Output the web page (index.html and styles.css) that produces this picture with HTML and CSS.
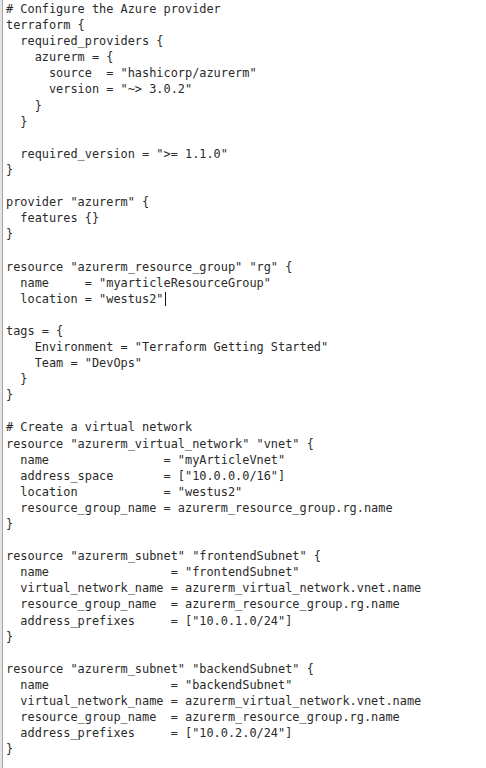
FILE: index.html
```html
<!DOCTYPE html>
<html>
<head>
<meta charset="utf-8">
<link rel="stylesheet" href="styles.css">
</head>
<body>
<div class="frame">
<pre class="code"># Configure the Azure provider
terraform {
  required_providers {
    azurerm = {
      source  = "hashicorp/azurerm"
      version = "~&gt; 3.0.2"
    }
  }

  required_version = "&gt;= 1.1.0"
}

provider "azurerm" {
  features {}
}

resource "azurerm_resource_group" "rg" {
  name     = "myarticleResourceGroup"
  location = "westus2"<span class="caret"></span>

tags = {
    Environment = "Terraform Getting Started"
    Team = "DevOps"
  }
}

# Create a virtual network
resource "azurerm_virtual_network" "vnet" {
  name                = "myArticleVnet"
  address_space       = ["10.0.0.0/16"]
  location            = "westus2"
  resource_group_name = azurerm_resource_group.rg.name
}

resource "azurerm_subnet" "frontendSubnet" {
  name                 = "frontendSubnet"
  virtual_network_name = azurerm_virtual_network.vnet.name
  resource_group_name  = azurerm_resource_group.rg.name
  address_prefixes     = ["10.0.1.0/24"]
}

resource "azurerm_subnet" "backendSubnet" {
  name                 = "backendSubnet"
  virtual_network_name = azurerm_virtual_network.vnet.name
  resource_group_name  = azurerm_resource_group.rg.name
  address_prefixes     = ["10.0.2.0/24"]
}</pre>
</div>
</body>
</html>
```
FILE: styles.css
```css
html, body {
  margin: 0;
  padding: 0;
  background: #ffffff;
}
.frame {
  height: 768px;
  box-sizing: border-box;
  border-left: 2px solid #e4e4e4;
  background: #fff;
}
.code {
  margin: 0;
  height: 100%;
  box-sizing: border-box;
  border-left: 1px solid #a4a4a4;
  padding: 1px 0 0 3px;
  font-family: "DejaVu Sans Mono", "Liberation Mono", monospace;
  font-size: 11.9px;
  line-height: 16.1px;
  color: #2a2a2a;
  white-space: pre;
}
.caret {
  display: inline-block;
  width: 1px;
  height: 14px;
  background: #111;
  vertical-align: -3px;
  margin-left: 1px;
}
```
